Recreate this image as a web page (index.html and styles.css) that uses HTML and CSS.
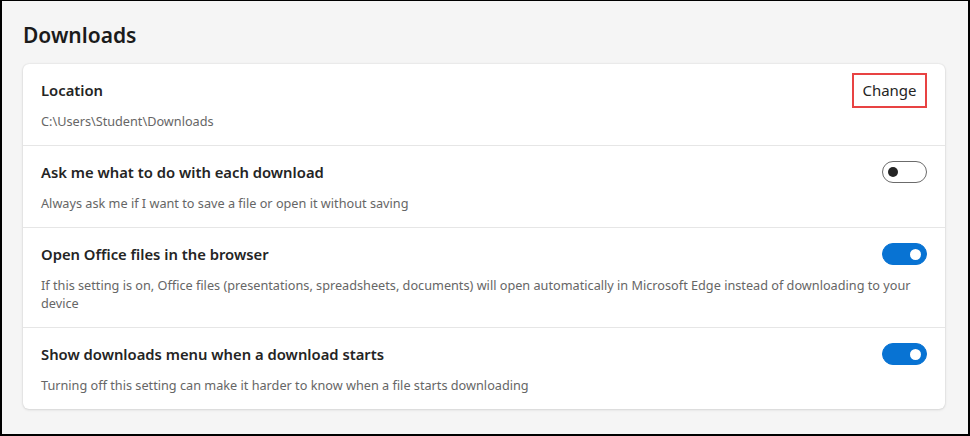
FILE: index.html
```html
<!DOCTYPE html>
<html lang="en">
<head>
<meta charset="utf-8">
<title>Downloads</title>
<link rel="stylesheet" href="styles.css">
</head>
<body>
<div class="frame">
  <h1 class="heading">Downloads</h1>
  <section class="card">
    <div class="row">
      <div class="head">
        <span class="title">Location</span>
        <button class="change">Change</button>
      </div>
      <p class="sub">C:\Users\Student\Downloads</p>
    </div>
    <div class="row">
      <div class="head">
        <span class="title">Ask me what to do with each download</span>
        <span class="toggle"><span class="knob"></span></span>
      </div>
      <p class="sub">Always ask me if I want to save a file or open it without saving</p>
    </div>
    <div class="row">
      <div class="head">
        <span class="title">Open Office files in the browser</span>
        <span class="toggle on"><span class="knob"></span></span>
      </div>
      <p class="sub wrap">If this setting is on, Office files (presentations, spreadsheets, documents) will open automatically in Microsoft Edge instead of downloading to your device</p>
    </div>
    <div class="row">
      <div class="head">
        <span class="title">Show downloads menu when a download starts</span>
        <span class="toggle on"><span class="knob"></span></span>
      </div>
      <p class="sub">Turning off this setting can make it harder to know when a file starts downloading</p>
    </div>
  </section>
</div>
</body>
</html>
```
FILE: styles.css
```css
* { box-sizing: border-box; }
html, body { margin: 0; padding: 0; }
body {
  width: 970px;
  height: 436px;
  background: #ffffff;
  font-family: "Noto Sans", "Open Sans", sans-serif;
  color: #242424;
}
.frame {
  width: 970px;
  height: 436px;
  border-style: solid;
  border-color: #000;
  border-width: 1px 2px 2px 2px;
  background: #f5f5f5;
  padding: 19px 21px 0 21px;
}
.heading {
  margin: 0 0 14px 0;
  font-size: 21px;
  line-height: 30px;
  font-weight: 600;
  color: #1b1b1b;
}
.card {
  width: 922px;
  background: #fff;
  border-radius: 6px;
  box-shadow: 0 0 2px rgba(0,0,0,0.12), 0 1px 3px rgba(0,0,0,0.10);
}
.row {
  padding: 15px 18px 15px 18px;
  border-bottom: 1px solid #e6e6e6;
}
.row:last-child { border-bottom: none; }
.head {
  height: 22px;
  display: flex;
  align-items: center;
  justify-content: space-between;
}
.title {
  font-size: 14.8px;
  line-height: 20px;
  font-weight: 600;
  color: #242424;
}
.sub {
  margin: 11px 0 0 0;
  font-size: 12.7px;
  line-height: 18px;
  color: #666666;
  max-width: 878px;
}
.change {
  height: 35px;
  width: 75px;
  margin: -7px 0;
  border: 2px solid #e84343;
  background: #fff;
  font-family: inherit;
  font-size: 15px;
  color: #242424;
  padding: 0;
}
.toggle {
  width: 45px;
  height: 22px;
  border: 1px solid #6b6b6b;
  border-radius: 11px;
  display: flex;
  align-items: center;
  padding: 0 5px;
  background: #fff;
}
.toggle .knob {
  width: 10px;
  height: 10px;
  border-radius: 50%;
  background: #242424;
}
.toggle.on {
  background: #0873d3;
  border-color: #0873d3;
  justify-content: flex-end;
}
.toggle.on .knob { background: #fff; width: 11px; height: 11px; }
```
